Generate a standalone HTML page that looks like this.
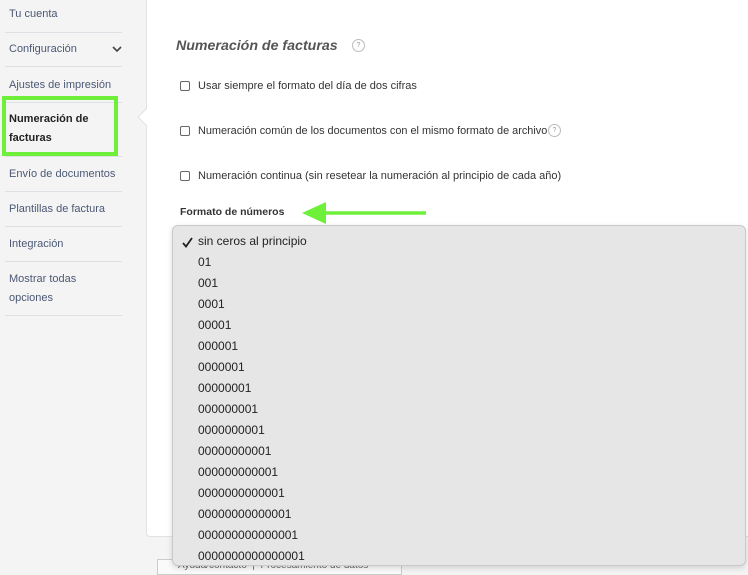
<!DOCTYPE html>
<html><head><meta charset="utf-8"><style>
*{margin:0;padding:0;box-sizing:border-box}
body{width:748px;height:574px;overflow:hidden;background:#f4f4f4;font-family:"Liberation Sans",Arial,sans-serif;position:relative}
.side{position:absolute;left:0;top:0;width:146px;height:574px;background:#f4f4f4}
.it{position:absolute;left:9px;font-size:11px;color:#4b5875;line-height:19px}
.ln{position:absolute;left:5px;width:117px;height:1px;background:#dde0e5}
.main{position:absolute;left:146px;top:0;width:602px;height:537px;background:#fff;border-left:1px solid #dfe2e6;border-bottom:1px solid #dfe2e6;border-bottom-left-radius:4px}
.t{position:absolute;font-size:11px;color:#333;white-space:nowrap}
.cb{position:absolute;width:10px;height:10px;border:1px solid #666;border-radius:2px;background:#fff}
.q{position:absolute;width:13px;height:13px;border:1px solid #bbb;border-radius:50%;font-size:7px;color:#999;text-align:center;line-height:11px}
.dd{position:absolute;left:172px;top:225px;width:574px;height:341px;background:#e6e6e6;border-radius:6px;border:1px solid #c9c9c9;box-shadow:0 2px 6px rgba(0,0,0,.15)}
.o{position:absolute;left:25px;font-size:12px;color:#222}
</style></head><body>
<div class="side">
<div class="it" style="top:5px">Tu cuenta</div><div class="ln" style="top:32px"></div>
<div class="it" style="top:40px">Configuración</div>
<svg style="position:absolute;left:112px;top:45px" width="10" height="8"><path d="M1 2 L5 6 L9 2" stroke="#444" stroke-width="1.6" fill="none"/></svg>
<div class="ln" style="top:66px"></div>
<div class="it" style="top:76px">Ajustes de impresión</div><div class="ln" style="top:102px"></div>
<div class="it" style="top:110px;font-weight:bold;color:#222">Numeración de<br>facturas</div>
<div style="position:absolute;left:2px;top:96px;width:116px;height:60px;border:4px solid #6ef03a"></div>
<div class="ln" style="top:156px"></div>
<div class="it" style="top:165px">Envío de documentos</div><div class="ln" style="top:191px"></div>
<div class="it" style="top:200px">Plantillas de factura</div><div class="ln" style="top:226px"></div>
<div class="it" style="top:235px">Integración</div><div class="ln" style="top:261px"></div>
<div class="it" style="top:270px">Mostrar todas<br>opciones</div><div class="ln" style="top:315px"></div>
</div>
<div class="main"></div>
<svg style="position:absolute;left:136px;top:107px" width="12" height="20"><path d="M11 1 L2 10 L11 19" fill="#fff" stroke="#dfe2e6"/></svg>
<div class="t" style="left:176px;top:38px;font-size:14.2px;font-weight:bold;font-style:italic;color:#555">Numeración de facturas</div>
<div class="q" style="left:352px;top:39px">?</div>
<div class="cb" style="left:180px;top:81px"></div><div class="t" style="left:198px;top:80px">Usar siempre el formato del día de dos cifras</div>
<div class="cb" style="left:180px;top:126px"></div><div class="t" style="left:198px;top:125px;font-size:10.9px">Numeración común de los documentos con el mismo formato de archivo</div>
<div class="q" style="left:548px;top:124px">?</div>
<div class="cb" style="left:180px;top:171px"></div><div class="t" style="left:198px;top:170px">Numeración continua (sin resetear la numeración al principio de cada año)</div>
<div class="t" style="left:180px;top:206px;font-weight:bold;font-size:10.5px">Formato de números</div>
<svg style="position:absolute;left:300px;top:200px" width="128" height="26"><path d="M22 13 H126" stroke="#6ef03a" stroke-width="3.5"/><path d="M2 13 L26 2 L26 24 Z" fill="#6ef03a"/></svg>
<div style="position:absolute;left:157px;top:559px;width:245px;height:16px;border:1px solid #ccc;background:#fafafa;font-size:10px;color:#666;padding-left:20px">Ayuda/contacto &nbsp;|&nbsp; Procesamiento de datos</div>
<div class="dd">
<svg style="position:absolute;left:9px;top:11px" width="11" height="11"><path d="M1 6 L4 9.5 L10 1" stroke="#222" stroke-width="1.8" fill="none"/></svg>
<div class="o" style="top:8px">sin ceros al principio</div>
<div class="o" style="top:29px">01</div>
<div class="o" style="top:50px">001</div>
<div class="o" style="top:71px">0001</div>
<div class="o" style="top:92px">00001</div>
<div class="o" style="top:113px">000001</div>
<div class="o" style="top:134px">0000001</div>
<div class="o" style="top:155px">00000001</div>
<div class="o" style="top:176px">000000001</div>
<div class="o" style="top:197px">0000000001</div>
<div class="o" style="top:218px">00000000001</div>
<div class="o" style="top:239px">000000000001</div>
<div class="o" style="top:260px">0000000000001</div>
<div class="o" style="top:281px">00000000000001</div>
<div class="o" style="top:302px">000000000000001</div>
<div class="o" style="top:323px">0000000000000001</div>
</div>
</body></html>
